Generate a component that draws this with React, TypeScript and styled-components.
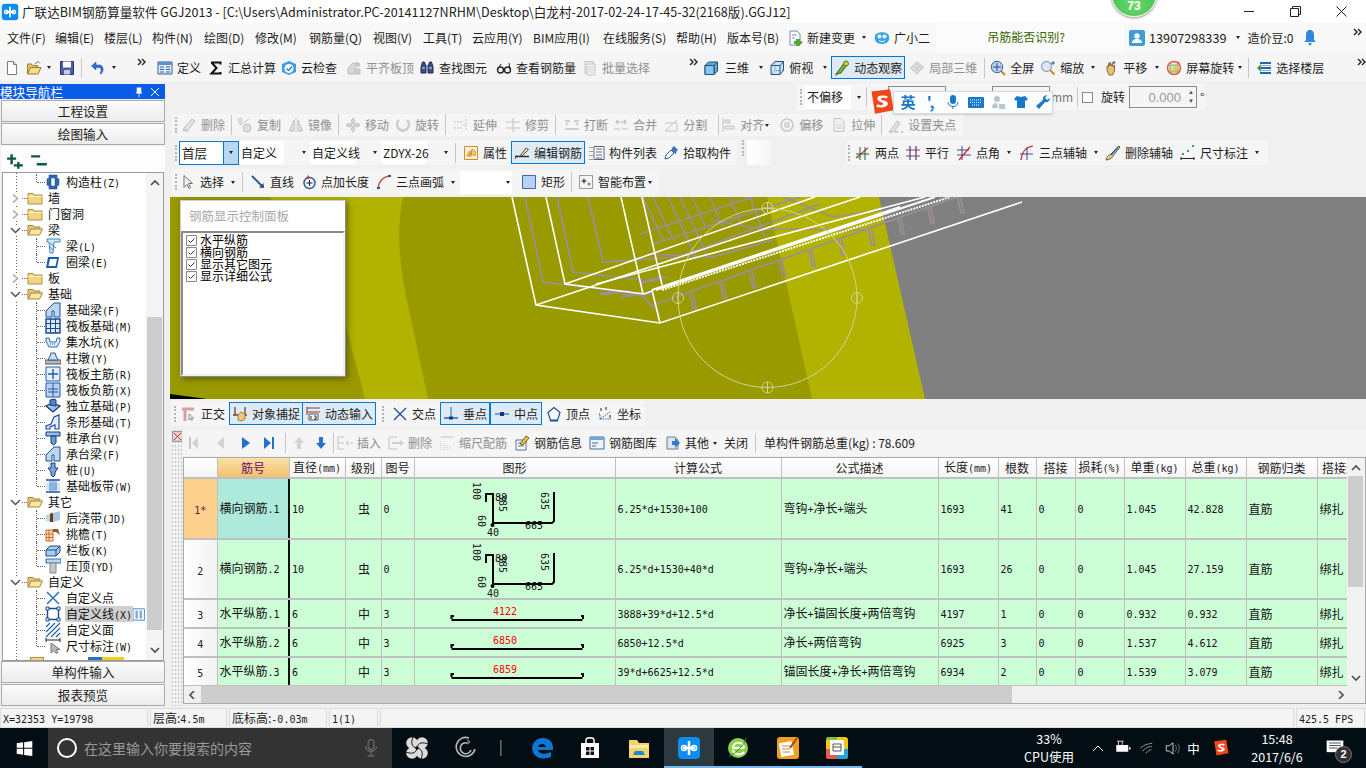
import React from "react";
import styled, { createGlobalStyle } from "styled-components";

const UI = `"Noto Sans CJK SC", "Liberation Sans", sans-serif`;
const MONO = `"DejaVu Sans Mono", "Noto Sans CJK SC", monospace`;

const Global = createGlobalStyle`
  * { box-sizing: border-box; }
  html, body { margin: 0; padding: 0; overflow: hidden; background: #f0f0f0; }
  body { font-family: ${UI}; font-size: 12px; color: #1c1c1c; }
`;

/* ---------- icon drawings ---------- */
const ic: Record<string, React.ReactNode> = {
  doc: <><path d="M3.5 1.5h6l3 3v10h-9z" fill="#fff" stroke="#7a7a7a" /><path d="M9.5 1.5v3h3" fill="#e4e4e4" stroke="#7a7a7a" /></>,
  open: <><path d="M1.5 14V4h4l1 1.5h5V8" fill="#e8c56a" stroke="#9a7a2c" /><path d="M1.5 14l3-6.5h10.5l-3 6.5z" fill="#f6dd8c" stroke="#9a7a2c" /><path d="M9 4l3-2.5 2 2" fill="none" stroke="#3c78d0" /></>,
  save: <><path d="M1.5 1.5h13v13h-13z" fill="#4a5fa8" stroke="#2a3570" /><path d="M4 1.5h8v6H4z" fill="#fff" /><path d="M5 10h6v4.5H5z" fill="#c7ccdc" /></>,
  undo: <path d="M11 14c3-3 3-8-1-9H6V2L1.5 6 6 10V7.5h3c2 0 3 3 1 6.5z" fill="#2c6fd0" stroke="#1b4b94" strokeWidth=".5" />,
  define: <><path d="M1 2h14v12H1z" fill="#e3edf8" stroke="#2e5f9e" /><path d="M1 2h14v3H1z" fill="#5e8fc8" /><path d="M3 7h4M3 9.5h4M3 12h4M9 7h4M9 9.5h4M9 12h4" stroke="#2e5f9e" /></>,
  sigma: <path d="M3 2.5h9.5v2M12.5 12v1.5H3.5L8.5 8 3.5 2.5" fill="none" stroke="#111" strokeWidth="2" />,
  check: <><path d="M1 4l7-3 7 3v8l-7 3-7-3z" fill="#3f9de8" /><circle cx="8" cy="8.5" r="4.5" fill="#fff" /><path d="M5.5 8.5l2 2 3.5-4" fill="none" stroke="#2f7fd0" strokeWidth="1.5" /></>,
  flush: <><path d="M2 14V8l5-5 4 1-2 4v6z" fill="#d8d8d8" stroke="#bdbdbd" /><path d="M9 14V9h5v5zM10 2l4 2-2 3z" fill="#cfcfcf" stroke="#c0c0c0" /></>,
  find: <><path d="M2 13V7l1.5-5h2L7 7v6zM9 13V7l1.5-5h2L14 7v6z" fill="#3a4f86" stroke="#1f2c52" /><path d="M7 5h2v4H7z" fill="#7f8fb8" /><path d="M3 8h3M10 8h3" stroke="#dfe6f5" /></>,
  look: <><circle cx="4.5" cy="10" r="3" fill="none" stroke="#222" strokeWidth="1.4" /><circle cx="11.5" cy="10" r="3" fill="none" stroke="#222" strokeWidth="1.4" /><path d="M2 9l3-5M14 9l-1-6M7.5 9.5h1" stroke="#222" /></>,
  batch: <><path d="M3 1.5h8v12H3z" fill="#eee" stroke="#c4c4c4" /><path d="M5 4h8v11H5z" fill="#f3f3f3" stroke="#c4c4c4" /><path d="M6.5 7h5M6.5 9.5h5M6.5 12h5" stroke="#cfcfcf" /></>,
  cube: <><path d="M2 5.5L5.5 2h9v9L11 14.5H2z" fill="#5da9d8" stroke="#20507c" /><path d="M2 5.5h9v9M11 5.5L14.5 2" fill="none" stroke="#20507c" /><path d="M2 5.5h9v9H2z" fill="#8cc6ea" stroke="#20507c" /></>,
  cubeT: <><path d="M2 5.5L6 1.5h8.5v9L11 14.5H2z" fill="#cfe4f4" stroke="#25527e" /><path d="M2 5.5h9v9M11 5.5l3.5-4" fill="none" stroke="#25527e" /><path d="M6 1.5v9h8.5M6 10.5L2 14.5" fill="none" stroke="#5d86ad" strokeDasharray="1 1" /></>,
  orbit: <><path d="M2 14l3-4 5-7 3 2-6 8z" fill="#73b53a" stroke="#3d6d17" /><circle cx="12" cy="3.5" r="2.5" fill="#d0d030" stroke="#4d7d17" /><path d="M1 15c2 0 3-.5 4-2" fill="none" stroke="#2d6fb0" /></>,
  cubeG: <><path d="M1.5 8L8 2l6.5 5L8 14z" fill="#e0e0e0" stroke="#c2c2c2" /><path d="M4 6l6.5 5M7 4l6 5M6 11l5-5" stroke="#c6c6c6" /></>,
  full: <><circle cx="7" cy="7" r="5.7" fill="#bcd2ee" stroke="#3861a0" /><path d="M7 3v8M3 7h8" stroke="#24488a" /><path d="M11 11l4 4" stroke="#b58a2a" strokeWidth="2" /></>,
  zoom: <><circle cx="6.5" cy="6.5" r="5" fill="#dce6f2" stroke="#7288a8" /><path d="M10 10l4.5 4.5" stroke="#c49a20" strokeWidth="2.2" /><path d="M13 1v4M11 3h4" stroke="#3060a0" /></>,
  pan: <><path d="M4 10V6l1.5 1V3l1.5 3V2l1.5 4 1-3 .5 4 1.5-2v6l-2 4H6z" fill="#e8c27a" stroke="#8a6a2a" /><path d="M11 1v3M9.5 2.5h3" stroke="#3060a0" /></>,
  spin: <><circle cx="8" cy="8" r="6.5" fill="none" stroke="#e05a40" strokeWidth="1.5" /><path d="M4 5h8v7H4z" fill="#cfe7a0" stroke="#80a060" /><path d="M9 6l3 5H6z" fill="#f0c040" /><path d="M12 1l2 3-3 .5z" fill="#e05a40" /></>,
  floors: <><path d="M4 3h11M4 8h11M4 13h11" stroke="#2268a8" strokeWidth="2" /><path d="M1 8l4-4v8z" fill="#3e9a3e" /><path d="M4 5.5h11M4 10.5h11" stroke="#8eb0cf" /></>,
  erase: <><path d="M2 13l2-3 7-8 3 2-7 9z" fill="#e4e4e4" stroke="#bbb" /><path d="M2 14h6" stroke="#c4c4c4" /></>,
  copy: <><circle cx="3" cy="3" r="1.8" fill="none" stroke="#c0c0c0" /><path d="M3 5v3l9-6" fill="none" stroke="#c4c4c4" /><circle cx="10" cy="11" r="4" fill="#dedede" stroke="#c0c0c0" /></>,
  mirror: <><path d="M1.5 14L6 3v11zM14.5 14L10 3v11z" fill="#e2e2e2" stroke="#bfbfbf" /><path d="M8 1v14" stroke="#c8c8c8" strokeDasharray="2 1" /></>,
  move: <path d="M8 1l2 3H9v3h3V6l3 2-3 2V9H9v3h1l-2 3-2-3h1V9H4v1L1 8l3-2v1h3V4H6z" fill="#dfdfdf" stroke="#bdbdbd" />,
  rotate: <path d="M4 3a6 6 0 1 0 8 0" fill="none" stroke="#cbcbcb" strokeWidth="2.4" />,
  extend: <path d="M1 5h8M1 11h8M13 2v12M10 8h3" stroke="#c2c2c2" strokeDasharray="2 1" />,
  trim: <path d="M8 1v14M1 5h14M1 11h14" stroke="#c2c2c2" />,
  brk: <path d="M1 4h5M10 4h5M1 12h14M2 8l2-2M12 6l2 2" stroke="#c2c2c2" strokeWidth="1.4" fill="none" />,
  merge: <path d="M1 12h6M9 12h6M3 5h10M5 3l-2 2 2 2M11 3l2 2-2 2" stroke="#c2c2c2" strokeWidth="1.2" fill="none" />,
  split: <><path d="M2 14L14 3" stroke="#c2c2c2" /><path d="M2 6h12M2 14h12v-8" stroke="#c6c6c6" fill="none" /></>,
  align: <><path d="M3 1v14" stroke="#bfbfbf" /><path d="M5 3h5v3H5zM5 9h9v3H5z" fill="#e6e6e6" stroke="#c6c6c6" /></>,
  offs: <><path d="M8 2a6 6 0 1 0 .1 0" fill="none" stroke="#cbcbcb" strokeWidth="1.6" /><path d="M6 6h4v4H6z" fill="#e2e2e2" stroke="#c2c2c2" /></>,
  stretch: <><path d="M3 1.5h7l3 3v10H3z" fill="#f0f0f0" stroke="#c4c4c4" /><path d="M5 8h6M5 11h6" stroke="#cfcfcf" /></>,
  grip: <><path d="M2 14l7-10 3 2-6 9z" fill="#e4e4e4" stroke="#c0c0c0" /><path d="M1 15h3M7 15h3M13 15h2" stroke="#bbb" strokeWidth="1.5" /></>,
  attr: <><path d="M1.5 1.5h13v13h-13z" fill="#fff2cf" stroke="#d08a30" /><path d="M3 11l4-6 3 3-2 4z" fill="#e8a040" /><path d="M9 4l4 3-1 4-4-2z" fill="#f6cb70" stroke="#8a6020" strokeWidth=".5" /></>,
  edit: <><path d="M1 11.5h14" stroke="#222" strokeWidth="1.4" /><path d="M1 14l2-4M6 11l6-8 2.5 1.5L8 11z" fill="#efe3b0" stroke="#52463a" /></>,
  list: <><path d="M5 1.5h10v13H5z" fill="#fff" stroke="#52647c" /><path d="M7 4h6M7 7h6M7 10h6M7 13h6" stroke="#52647c" /><path d="M1 2v1M1 6v1M1 10v1M1 14v1M3 2v1M3 6v1M3 10v1M3 14v1" stroke="#444" /></>,
  pick: <><path d="M2 14l1-4 5-5 3 3-5 5z" fill="#fff" stroke="#3060a8" /><path d="M9 3l2-2 4 4-2 2 .5 1-1 1-4-4z" fill="#3c73b8" /></>,
  two: <><path d="M1 13l12-10" stroke="#d03030" strokeWidth="1.1" /><path d="M1 9h13M5 2v13M10 2v13" stroke="#2e5c34" /><circle cx="3" cy="12" r="1" fill="#3e9a3e" /></>,
  para: <><path d="M1 5h14M1 11h14" stroke="#c03040" strokeWidth="1.2" /><path d="M5 1v14M11 1v14" stroke="#32468c" strokeWidth="1.2" /></>,
  ang: <><path d="M1 10h14M1 5h12M6 1v14" stroke="#3c4a92" /><path d="M3 15L14 2" stroke="#d02828" strokeWidth="1.2" /></>,
  arcA: <><path d="M2 15C3 6 7 2 14 1" fill="none" stroke="#d02828" strokeWidth="1.2" /><path d="M1 9h13M8 2v13" stroke="#3c4a92" /></>,
  brush: <><path d="M1 15c1-4 3-5 5-6l8-8 1 1-7 9c-1 2-4 4-7 4z" fill="#f0d070" stroke="#555" /><path d="M6 10l7-8" stroke="#3060b0" strokeWidth="1.5" /></>,
  dim: <><path d="M1 12v3M14 12v3M1 13.5h13" stroke="#222" /><path d="M2 8h2v2H2zM7 5h2v2H7zM12 0h2v2h-2z" fill="#39a53d" /></>,
  arrow: <path d="M4 1.5v12l3-3 2 4 1.5-1-2-4h4z" fill="#f6f6f6" stroke="#6a7080" />,
  line: <><path d="M2 2l11 11" stroke="#254f88" strokeWidth="1.8" /><path d="M9 13.5l5 .5-.5-5z" fill="#254f88" /></>,
  addL: <><circle cx="8.5" cy="9" r="5.5" fill="#eef3fa" stroke="#2d5590" strokeWidth="1.4" /><path d="M8.5 6v6M5.5 9h6" stroke="#222" /><path d="M8 1L5 3.5l3 2z" fill="#d04030" /></>,
  arc: <><path d="M2 14C3 7 7 3 13 2" fill="none" stroke="#c8563a" strokeWidth="1.5" /><path d="M1 13h3v2H1zM12 1h3v2h-3z" fill="#2a5a9c" /></>,
  rect: <path d="M1.5 1.5h13v13h-13z" fill="#b8d0f2" stroke="#3d6ab0" />,
  smart: <><path d="M1.5 1.5h13v13h-13z" fill="#f4f4f4" stroke="#444" strokeDasharray="1 1" /><path d="M6 4l1 2 2 1-2 1-1 2-1-2-2-1 2-1zM11 8l.7 1.5 1.3.5-1.3.5-.7 1.5-.7-1.500-1.300-.5 1.300-.5z" fill="#555" /></>,
  ortho: <><path d="M1 3h12" stroke="#d8a0a0" strokeWidth="3" /><path d="M4 3v12" stroke="#d8a0a0" strokeWidth="3" /><path d="M8 8v6l1.5-1.5 1 2 1-.5-1-2h2z" fill="#eee" stroke="#666" strokeWidth=".6" /></>,
  snap: <><path d="M3 1v8M13 1v8M1 9h14" stroke="#7a3a2a" strokeWidth="1.3" /><path d="M6 9l3-3 4 2v5l-3 2-4-1z" fill="#edc97c" stroke="#a08038" /></>,
  dyn: <><path d="M2 2h13M2 6h13" stroke="#8a3a3a" /><path d="M2 1v8" stroke="#8a3a3a" /><path d="M4 8h9v6H4z" fill="#fff" stroke="#555" /><path d="M6 10v3M9 10h2v3H9" stroke="#222" fill="none" /></>,
  inter: <path d="M2 2l12 12M14 2L2 14" stroke="#1c4f9a" strokeWidth="1.4" />,
  perp: <><path d="M1 12h14" stroke="#2a62b0" strokeWidth="1.5" /><path d="M8 1v11" stroke="#2a62b0" /><path d="M6 10.5h4v3H6z" fill="#123a78" /></>,
  mid: <><path d="M1 8h14" stroke="#5b8ac2" strokeWidth="1.6" /><path d="M6 6h4v4H6z" fill="#123a78" /></>,
  vert: <><path d="M8 1.5l6 5-2.5 8h-7L2 6.5z" fill="#fff" stroke="#1c4f9a" strokeWidth="1.2" /><path d="M4 13.5h8v2H4z" fill="#1c4f9a" /></>,
  coord: <><path d="M3 13h11M3 13V8M13 6L3 13" stroke="#2a62b0" strokeDasharray="1.5 1" fill="none" /><path d="M4 2v3M9 1v3M13 9v3M2 8h1" stroke="#222" /></>,
  first: <><path d="M3 2h2v12H3z" fill="#c6c6c6" /><path d="M12 2L6 8l6 6z" fill="#d2d2d2" /></>,
  prev: <path d="M12 2L5 8l7 6z" fill="#d2d2d2" />,
  next: <path d="M4 2l8 6-8 6z" fill="#2470d2" />,
  last: <><path d="M3 2l7 6-7 6z" fill="#2470d2" /><path d="M11 2h2v12h-2z" fill="#2470d2" /></>,
  up: <path d="M8 2l5 6h-3v6H6V8H3z" fill="#d2d2d2" />,
  down: <path d="M8 14l5-6h-3V2H6v6H3z" fill="#2b72cf" />,
  ins: <><path d="M1 2h6M1 2v12M1 14h6M1 8h6" stroke="#c2c2c2" /><path d="M9 6h3v4H9zM13 7h3v2h-3z" fill="#dadada" /></>,
  del: <><path d="M1 2h8M1 2v12M1 14h8" stroke="#c4c4c4" /><path d="M4 7h8v2H4z" fill="#cfcfcf" /><path d="M12 5l4 3-4 3z" fill="#cfcfcf" /></>,
  scale: <><path d="M2 15V5M5 15V7M8 15V9M11 15v-4" stroke="#c4c4c4" strokeDasharray="1 1" /><path d="M2 2h12" stroke="#c0c0c0" /></>,
  info: <><path d="M2 5h10v10H2z" fill="#fff" stroke="#4c6c9a" /><path d="M4 8h6M4 11h6" stroke="#4c6c9a" /><path d="M6 9l6-8 3 2-6 7z" fill="#f0c450" stroke="#7a5a1a" /></>,
  lib: <><path d="M1 2h14v12H1z" fill="#eef4fb" stroke="#3c6cab" /><path d="M1 2h14v3H1z" fill="#7aa4d6" /><path d="M3 8h6M3 11h4" stroke="#3c6cab" /></>,
  other: <><path d="M2 2h8l3 3v9H2z" fill="#dce6f2" stroke="#6c7e94" /><path d="M7 6h3V3l5 5-5 5v-3H7z" fill="#3a78c8" /></>,
  user: <><rect width="16" height="16" rx="2" fill="#3f9cd8" /><circle cx="8" cy="6" r="2.7" fill="#fff" /><path d="M3 13c0-3 2-4 5-4s5 1 5 4z" fill="#fff" /></>,
  bell: <><path d="M8 0c3 0 4 2.5 4 5v5l2 2H2l2-2V5c0-2.5 1-5 4-5z" fill="#2e86de" /><path d="M6 13h4l-2 3z" fill="#2e86de" /></>,
  change: <><path d="M3 1h7l3 3v11H3z" fill="#fff" stroke="#6c8eb8" /><path d="M5 5h5M5 8h3" stroke="#6c8eb8" /><path d="M9 9h4v2h2v3h-2v2H9v-2H7v-3h2z" fill="#54a83a" /></>,
  bot: <><path d="M1 6C2 1 14 1 15 6c1 4-1 8-7 8S0 10 1 6z" fill="#36a3ea" /><circle cx="5.5" cy="6.5" r="2" fill="#fff" /><circle cx="10.5" cy="6.5" r="2" fill="#fff" /><path d="M5 10.5c2 1.5 4 1.5 6 0" fill="none" stroke="#fff" /></>,
  folder: <><path d="M1 3.5h5l1 1.5h8v9H1z" fill="#f6d67c" stroke="#b28f46" /><path d="M1 6.5h14" stroke="#fff5cf" /></>,
  folderO: <><path d="M1 13V3.5h5l1 1.5h6v2" fill="#e6c878" stroke="#a6863e" /><path d="M1 13l3-6h11.500l-3 6z" fill="#fbe5a0" stroke="#a6863e" /></>,
  col: <path d="M4 1h8v3l2 1v6l-2 1v3H4v-3l-2-1V5l2-1zM6 4v8h4V4z" fill="#2f67b2" stroke="#1a3f7a" strokeWidth=".5" />,
  beam: <><path d="M2 1h13v3h-6l-1 11H5L4 4H2z" fill="#d6e8f6" stroke="#3a8ac0" /><path d="M5 5l6 5M4 8l4 4" stroke="#3a8ac0" /></>,
  ring: <path d="M3 3h11l-2 11H1zM5 5l-1.5 7h7L12 5z" fill="#1e5cb0" fillRule="evenodd" />,
  fbeam: <path d="M1 15V9l8-8h6v14H9V9H7v6z" fill="#bcd6ee" stroke="#1c4f9a" />,
  raft: <><path d="M1 1h14v14H1z" fill="#dbe8f6" stroke="#18498f" strokeWidth="1.4" /><path d="M1 5.5h14M1 10.5h14M5.500 1v14M10.500 1v14" stroke="#18498f" /></>,
  pit: <><path d="M1 4h3l1 4h6l1-4h3v3l-3 6H4L1 7z" fill="#dcebf8" stroke="#2a6cb0" /><path d="M5 10h6" stroke="#2a6cb0" strokeDasharray="1 1" /></>,
  pier: <><path d="M0 10h16v4H0z" fill="#b8b8b8" stroke="#555" /><path d="M6 3h4l1 3 2 4H3l2-4z" fill="#cfe0f0" stroke="#2a5a9c" /></>,
  rmain: <><path d="M1 1h14v14H1z" fill="#e6f0fa" stroke="#1f5bb0" /><path d="M8 3v10M3 8h10" stroke="#1f5bb0" strokeWidth="1.4" /></>,
  rneg: <><path d="M1 1h14v14H1z" fill="#bdd2ea" stroke="#1f5bb0" /><path d="M8 1v14M3 7h10M3 10h10" stroke="#1f5bb0" /></>,
  iso: <><path d="M1 8l6-3 8 3-7 6z" fill="#9ac0e6" stroke="#123b7c" strokeWidth="1.3" /><path d="M5 7V2l4-1 2 1v6z" fill="#4f83c4" stroke="#123b7c" /></>,
  strip: <path d="M1 15v-3l5-2 3-7 5-2v14h-4v-4l-5 2v2z" fill="#e2edf8" stroke="#1a4f9c" strokeWidth="1.2" />,
  cap: <><path d="M1 2h14v4H1z" fill="#9ac0e6" stroke="#123b7c" /><path d="M6 6h5v7l-2.500 2L6 13z" fill="#6e9cd2" stroke="#123b7c" /></>,
  pile: <path d="M6 1h4v5h3l-3 4v3l-2 2-2-2v-3L3 6h3z" fill="#7aa8da" stroke="#123b7c" />,
  band: <><path d="M1 5h14v7H1z" fill="#b9d2ee" opacity=".6" /><path d="M1 2h14M1 14h14" stroke="#1a4f9c" strokeWidth="1.5" /><path d="M5 2v12M11 2v12M7 2v12M9 2v12" stroke="#3c80c6" /></>,
  post: <><path d="M1 5l4-1v8l-4-1z" fill="#bcd6ee" /><path d="M5 4c3-2 2-2 3 0v8H5z" fill="#6e3d18" /><path d="M8 3l7-2v9l-7 2z" fill="#a9c6e6" /></>,
  eave: <><path d="M1 4h7v11H1z" fill="#f8dcc0" stroke="#c96a2a" /><path d="M1 8h7M1 11.500h7M4 4v11" stroke="#c96a2a" /><path d="M8 3h5l2 6-4-3H8z" fill="#8a5a32" /></>,
  rail: <><path d="M1 8l4-4h10v6l-4 4H1z" fill="#a9cbea" stroke="#1d4e8c" /><path d="M1 8h10v6M11 8l4-4" fill="none" stroke="#1d4e8c" /></>,
  ptop: <><path d="M1 1h15v4H1z" fill="#bcd8f2" stroke="#2a6cb0" /><path d="M5 5h6v10H5z" fill="#c8c8c8" stroke="#888" /></>,
  cpt: <path d="M2 2l12 12M14 2L2 14" stroke="#3a74bc" strokeWidth="1.6" />,
  cln: <><path d="M2.500 2.500h11v11h-11z" fill="none" stroke="#154a9a" strokeWidth="1.4" /><path d="M1 1h3v3H1zM12 1h3v3h-3zM1 12h3v3H1zM12 12h3v3h-3z" fill="#fff" stroke="#154a9a" /></>,
  cfc: <path d="M1 5l4-4M1 10l9-9M1 15L15 1M6 15l9-9M11 15l4-4" stroke="#1f5bb0" strokeWidth="1.1" />,
  dimt: <><path d="M1 2h14M1 0v4M15 0v4" stroke="#222" /><path d="M6 5v10l3-2.500 2 3 2-1-2-3h4z" fill="#bbb" stroke="#777" /></>,
  tbl: <><path d="M0 1h14v14H0z" fill="#fff" stroke="#2670c8" /><path d="M3 3h3v10H3zM8 3h3v10H8z" fill="#2670c8" opacity=".6" /></>,
  pin: <path d="M5 2h6v6l1.500 2h-9L5 8zM7.500 10h1v5h-1z" fill="#fff" />,
  plus: <path d="M5 1v9M1 5h8M11 8v6M7 11h8" stroke="#0b5c3a" strokeWidth="2.200" />,
  minus: <path d="M1 3h8M6 10h9" stroke="#0b5c3a" strokeWidth="2.200" />,
  closeRed: <><path d="M1 1h14v14H1z" fill="#f7d8d8" stroke="#555" /><path d="M3 3l10 10M13 3L3 13" stroke="#b02a2a" strokeWidth="1.400" /></>,
};

const tb: Record<string, React.ReactNode> = {
  win: <path d="M1 4.500l9-1.300V11H1zM11.500 3L23 1.300V11H11.500zM1 12.500h9v8.300L1 19.500zM11.500 12.500H23V22.700L11.500 21z" fill="#fff" />,
  mic: <><rect x="8.500" y="2" width="7" height="12" rx="3.500" fill="none" stroke="#8a8a8a" /><path d="M5.500 10c0 8 13 8 13 0M12 17v4M8 21.500h8" fill="none" stroke="#8a8a8a" /></>,
  fan: <><circle cx="7" cy="7" r="5.800" fill="#dcdcdc" /><circle cx="17" cy="7" r="5.800" fill="#dcdcdc" /><circle cx="7" cy="17" r="5.800" fill="#dcdcdc" /><circle cx="17" cy="17" r="5.800" fill="#dcdcdc" /><path d="M12 12C6 11 6 6 8 1M12 12C18 13 18 18 16 23M12 12c1-6 6-6 11-4M12 12c-1 6-6 6-11 4" fill="none" stroke="#111" /></>,
  swirl: <><path d="M21 13a9.500 9.500 0 1 1-6-11" fill="none" stroke="#b8b8b8" strokeWidth="1.600" /><path d="M17 14a5.500 5.500 0 1 1-3.500-7" fill="none" stroke="#b8b8b8" strokeWidth="1.600" /><path d="M13 4l3 2-3 2" fill="none" stroke="#b8b8b8" /></>,
  edge: <path d="M2 12C3 5 8 2 13 2c6 0 10 4 10 10v2H8c.5 4 7 5 13 2v5c-7 3-18 2-19-9zm6-1h8c0-4-7-4-8 0z" fill="#0a78d7" />,
  store: <><path d="M3 7h18v15H3z" fill="#fff" /><path d="M8 7V4c0-3 8-3 8 0v3" fill="none" stroke="#fff" strokeWidth="1.500" /><path d="M8 11h3.500v3.500H8zM12.500 11H16v3.500h-3.500zM8 15.500h3.500V19H8zM12.500 15.500H16V19h-3.500z" fill="#111" /></>,
  fold: <><path d="M2 4h8l2 3h10v15H2z" fill="#f4d36b" /><path d="M2 9h20v3H2z" fill="#fbe9a8" /><path d="M8 15h8l2 4H6z" fill="#1e88d8" /></>,
  app: <><rect x="1" y="1" width="22" height="22" rx="4" fill="#0e8cf0" /><path d="M12 5v14M6 12h12" stroke="#fff" strokeWidth="2.500" /><circle cx="7" cy="12" r="2.500" fill="none" stroke="#fff" strokeWidth="1.500" /><circle cx="17" cy="12" r="2.500" fill="none" stroke="#fff" strokeWidth="1.500" /></>,
  ie: <><circle cx="12" cy="12" r="10" fill="#8bd14a" /><path d="M6 12h12M7 12c0-7 10-7 11 0M7 14c1 5 8 6 11 2" fill="none" stroke="#fff" strokeWidth="2.200" /><path d="M3 20C6 21 20 8 20 2" fill="none" stroke="#3a8a2e" /></>,
  notes: <><rect x="1" y="1" width="22" height="22" rx="3" fill="#f0a020" /><path d="M4 6h13v14H4z" fill="#fff" transform="rotate(-10 10 13)" /><path d="M6 10h8M6 13h8M7 16h7" stroke="#c84" /><path d="M14 12L21 2" stroke="#a5421a" strokeWidth="2" /></>,
  board: <><rect x="1" y="1" width="22" height="22" rx="3" fill="#f5c518" /><path d="M1 13h11v10H4a3 3 0 0 1-3-3z" fill="#e85a4f" /><path d="M12 13h11v7a3 3 0 0 1-3 3h-8z" fill="#1fa5d8" /><path d="M1 4a3 3 0 0 1 3-3h8v3H1z" fill="#7bc043" /><path d="M5 4h14v15H5z" fill="#fff" /><path d="M8 8h8M8 8v7h8V8M8 11h8" fill="none" stroke="#555" /></>,
  batt: <><path d="M3 8h16v9H3z" fill="#fff" /><path d="M20 11h2v3h-2z" fill="#fff" /><path d="M6 3v5M11 3v5M4 3h9" stroke="#fff" /></>,
  wifi: <path d="M2 12c5-5 12-6 16-6M5 16c3-4 8-6 12-6M9 19c2-2 5-4 8-5" fill="none" stroke="#fff" strokeDasharray="2 1" />,
  spk: <><path d="M3 9h4l5-4v15l-5-4H3z" fill="none" stroke="#fff" /><path d="M15 8c2 3 2 6 0 9M18 6c3 4 3 9 0 13" fill="none" stroke="#888" /></>,
  sg: <><path d="M3 3l16-2 3 18-16 3z" fill="#f0471a" /><path d="M8 9c0-3 6-3 9-2l-1 2c-2-1-5-1-5 .5s6 1 6 4-6 4-10 2.500l1-2c2 1 5 1 5-.5S8 12 8 9z" fill="#fff" /></>,
  note: <><path d="M2 3h20v14H2z" fill="#fff" /><path d="M5 6h14M5 9h14M5 12h10" stroke="#333" /></>,
};

const Svg = styled.svg<{ $s: number }>`
  width: ${(p) => p.$s}px;
  height: ${(p) => p.$s}px;
  flex: none;
  display: block;
`;
const Ico = ({ k, s = 16 }: { k: string; s?: number }) => (
  <Svg $s={s} viewBox="0 0 16 16">{ic[k]}</Svg>
);
const TIco = ({ k, s = 24 }: { k: string; s?: number }) => (
  <Svg $s={s} viewBox="0 0 24 24">{tb[k]}</Svg>
);

/* ---------- mixed bitmap-like text ---------- */
const Lat = styled.span`
  font-family: ${MONO};
  font-size: 10px;
`;
const Mix = ({ t }: { t: string }) => (
  <>
    {t.split(/([\x20-\x7e]+)/).map((s, i) => (i % 2 ? <Lat key={i}>{s}</Lat> : s))}
  </>
);

/* ---------- chrome ---------- */
const Page = styled.div`
  position: relative;
  width: 1366px;
  height: 768px;
  overflow: hidden;
  display: flex;
  flex-direction: column;
  background: #f0f0f0;
`;
const TitleBar = styled.div`
  height: 23px;
  background: #fff;
  display: flex;
  align-items: center;
  padding-left: 1px;
`;
const TitleText = styled.div`
  margin-left: 3px;
  font-size: 12.6px;
  line-height: 23px;
  white-space: nowrap;
  width: 1204px;
  color: #222;
`;
const WinBtn = styled.div<{ $w: number }>`
  width: ${(p) => p.$w}px;
  display: flex;
  justify-content: center;
`;
const Badge = styled.div`
  position: absolute;
  left: 1111px;
  top: -29px;
  width: 46px;
  height: 46px;
  border-radius: 50%;
  background: radial-gradient(circle at 50% 70%, #68d86a, #37b84a);
  box-shadow: 0 1px 3px rgba(0, 0, 0, 0.45);
  border: 1px solid #e5f5e5;
  color: #fff;
  font: bold 12px/12px "Liberation Sans", sans-serif;
  display: flex;
  align-items: flex-end;
  justify-content: center;
  padding-bottom: 4px;
`;
const MenuBar = styled.div`
  height: 31px;
  background: #f8f8f8;
  display: flex;
  align-items: center;
  padding-left: 7px;
  padding-bottom: 2px;
  white-space: nowrap;
`;
const MenuItem = styled.div<{ $w?: number; $ml?: number; $dim?: boolean; $fs?: number }>`
  ${(p) => (p.$w ? `width: ${p.$w}px;` : "")}
  margin-left: ${(p) => p.$ml ?? 0}px;
  ${(p) => (p.$dim ? "color:#777;" : "")}
  ${(p) => (p.$fs ? `font-size:${p.$fs}px;` : "")}
  line-height: 20px;
  flex: none;
`;
const Hint = styled.div`
  width: 188px;
  height: 31px;
  margin: 0 5px 0 6px;
  padding-right: 8px;
  background: #fbfbfb;
  color: #336600;
  text-align: center;
  line-height: 30px;
  flex: none;
`;
const Inline = styled.div<{ $gap?: number; $ml?: number }>`
  display: flex;
  align-items: center;
  gap: ${(p) => p.$gap ?? 4}px;
  margin-left: ${(p) => p.$ml ?? 0}px;
  flex: none;
`;
const Caret = styled.i<{ $ml?: number; $mr?: number }>`
  display: block;
  flex: none;
  width: 0;
  height: 0;
  margin-left: ${(p) => p.$ml ?? 6}px;
  margin-right: ${(p) => p.$mr ?? 0}px;
  border-left: 2.5px solid transparent;
  border-right: 2.5px solid transparent;
  border-top: 3px solid #222;
`;
const MoreSvg = styled.svg<{ $ml: number }>`
  width: 9px;
  height: 8px;
  margin-left: ${(p) => p.$ml}px;
  margin-bottom: 11px;
  flex: none;
`;
const More = ({ ml = 0 }: { ml?: number }) => (
  <MoreSvg $ml={ml} viewBox="0 0 9 8">
    <path d="M1 1l3 3-3 3M5 1l3 3-3 3" fill="none" stroke="#222" strokeWidth="1.400" />
  </MoreSvg>
);
const MainBar = styled.div`
  height: 27px;
  display: flex;
  align-items: center;
  white-space: nowrap;
  background: #f5f5f5;
`;
const Sep = styled.div<{ $ml?: number; $mr?: number }>`
  width: 1px;
  height: 20px;
  background: #c6c6c6;
  margin-left: ${(p) => p.$ml ?? 6}px;
  margin-right: ${(p) => p.$mr ?? 6}px;
  flex: none;
`;
const ToolWrap = styled.div<{ $m: number; $dim?: boolean; $on?: boolean; $pad?: number; $gap?: number }>`
  display: flex;
  align-items: center;
  flex: none;
  gap: ${(p) => p.$gap ?? 4}px;
  height: ${(p) => (p.$on ? "23px" : "auto")};
  margin-left: ${(p) => p.$m}px;
  padding: 0 ${(p) => p.$pad ?? 0}px;
  color: ${(p) => (p.$dim ? "#8f8f8f" : "#1c1c1c")};
  line-height: 18px;
  ${(p) => (p.$on ? "background:#deebf6;border:1px solid #0078d7;" : "")}
`;
const Tool = ({ icon, m = 7, dim, on, pad, gap, children }: { icon?: string; m?: number; dim?: boolean; on?: boolean; pad?: number; gap?: number; children?: React.ReactNode }) => (
  <ToolWrap $m={m} $dim={dim} $on={on} $pad={pad} $gap={gap}>
    {icon && <Ico k={icon} />}
    {children}
  </ToolWrap>
);
const White = styled.div<{ $w: number; $ml?: number; $h?: number }>`
  width: ${(p) => p.$w}px;
  height: ${(p) => p.$h ?? 23}px;
  margin-left: ${(p) => p.$ml ?? 0}px;
  background: #fff;
  display: flex;
  align-items: center;
  padding-left: 2px;
  flex: none;
  line-height: 18px;
`;
const Grip = styled.div<{ $ml?: number }>`
  width: 2px;
  height: 16px;
  margin-left: ${(p) => p.$ml ?? 0}px;
  border-left: 2px dotted #b4b4b4;
  flex: none;
`;

/* ---------- workspace ---------- */
const Work = styled.div`
  display: flex;
  margin-top: 3px;
  height: 622px;
`;
const Nav = styled.div`
  width: 165px;
  display: flex;
  flex-direction: column;
  flex: none;
`;
const NavHead = styled.div`
  height: 15px;
  background: #0a5ce6;
  color: #fff;
  line-height: 15px;
  font-size: 12.6px;
  display: flex;
  align-items: center;
  flex: none;
`;
const NavTitle = styled.div`
  width: 134px;
`;
const NavBtn = styled.div<{ $mt?: number }>`
  height: 22px;
  margin: ${(p) => p.$mt ?? 0}px 0 0 1px;
  width: 164px;
  border: 1px solid #aaa;
  background: linear-gradient(#fbfbfb, #ececec);
  text-align: center;
  line-height: 20px;
  font-size: 12.6px;
  flex: none;
`;
const PlusRow = styled.div`
  height: 26px;
  width: 164px;
  margin: 1px 0 0 1px;
  background: #fdfdfd;
  display: flex;
  align-items: center;
  padding: 5px 0 0 5px;
  gap: 6px;
  flex: none;
`;
const TreeBox = styled.div`
  flex: none;
  width: 162px;
  height: 489px;
  margin: 0 0 0 2px;
  border: 1px solid #9a9a9a;
  background: #fff;
  display: flex;
  overflow: hidden;
`;
const TreeList = styled.div`
  width: 143px;
  height: 487px;
  padding-top: 1px;
  overflow: hidden;
  flex: none;
  background: repeating-linear-gradient(#666 0 1px, transparent 1px 3px) 13px 0 / 1px 100% no-repeat, #fff;
`;
const TRow = styled.div`
  position: relative;
  height: 16px;
  display: flex;
  align-items: center;
  white-space: nowrap;
  line-height: 16px;
  font-size: 12px;
  color: #111;
`;
const ParentRow = styled(TRow)`
  padding-left: 7px;
`;
const Chev = styled.svg`
  width: 11px;
  height: 11px;
  flex: none;
  background: #fff;
`;
const Dots = styled.i`
  width: 5px;
  border-top: 1px dotted #666;
  margin: 0 0 0 1px;
  flex: none;
`;
const ChildRow = styled(TRow)<{ $last?: boolean }>`
  padding-left: 42px;
  &::before {
    content: "";
    position: absolute;
    left: 33px;
    top: 0;
    height: ${(p) => (p.$last ? "8px" : "16px")};
    border-left: 1px dotted #666;
  }
  &::after {
    content: "";
    position: absolute;
    left: 34px;
    top: 8px;
    width: 8px;
    border-top: 1px dotted #666;
  }
`;
const RowLabel = styled.span<{ $sel?: boolean }>`
  margin-left: 4px;
  padding: 0 1px;
  height: 16px;
  ${(p) => (p.$sel ? "background:#cfcfcf;" : "")}
`;
const ClippedRow = styled.div`
  height: 6px;
  overflow: hidden;
  display: flex;
  align-items: flex-start;
  padding: 3px 0 0 27px;
  gap: 44px;
`;
const ClippedFold = styled.i`
  width: 14px;
  height: 3px;
  background: #f6d67c;
  border: 1px solid #b28f46;
  border-bottom: 0;
`;
const ClippedTag = styled.i`
  width: 36px;
  height: 3px;
  background: linear-gradient(90deg, #2670c8 0 40%, #f2cf1a 40%);
`;
const TreeBar = styled.div`
  flex: 1;
  background: #f4f4f4;
  display: flex;
  flex-direction: column;
  align-items: center;
`;
const ArrowBox = styled.div<{ $mt?: number }>`
  height: 16px;
  width: 16px;
  margin-top: ${(p) => p.$mt ?? 0}px;
  display: flex;
  align-items: center;
  justify-content: center;
  flex: none;
`;
const dirs: Record<string, string> = { up: "M1 6l4-4 4 4", down: "M1 2l4 4 4-4", left: "M6 0L2 4l4 4", right: "M2 0l4 4-4 4" };
const Arrow = ({ d, mt }: { d: string; mt?: number }) => (
  <ArrowBox $mt={mt}>
    <svg width="10" height="8" viewBox="0 0 10 8">
      <path d={dirs[d]} fill="none" stroke="#505050" strokeWidth="1.700" />
    </svg>
  </ArrowBox>
);
const Thumb = styled.div<{ $mt: number; $h: number; $w?: number }>`
  width: ${(p) => p.$w ?? 15}px;
  height: ${(p) => p.$h}px;
  margin-top: ${(p) => p.$mt}px;
  background: #cdcdcd;
  flex: none;
`;
const Grow = styled.div`
  flex: 1;
`;

/* ---------- content ---------- */
const Content = styled.div`
  margin-left: 5px;
  width: 1196px;
  display: flex;
  flex-direction: column;
`;
const Bar = styled.div<{ $h: number; $mt?: number; $ml?: number; $w?: number }>`
  height: ${(p) => p.$h}px;
  margin-top: ${(p) => p.$mt ?? 0}px;
  margin-left: ${(p) => p.$ml ?? 0}px;
  ${(p) => (p.$w ? `width:${p.$w}px;` : "")}
  background: #f5f5f5;
  display: flex;
  align-items: center;
  white-space: nowrap;
  flex: none;
`;
const RowGroup = styled.div<{ $h: number; $mt: number }>`
  height: ${(p) => p.$h}px;
  margin-top: ${(p) => p.$mt}px;
  display: flex;
  flex: none;
`;
const Spin = styled.div<{ $w: number; $ml: number }>`
  width: ${(p) => p.$w}px;
  height: 22px;
  margin-left: ${(p) => p.$ml}px;
  border: 1px solid #8a8a8a;
  background: #f5f5f5;
  display: flex;
  align-items: center;
  justify-content: flex-end;
  color: #9a9a9a;
  padding-right: 2px;
  gap: 7px;
  font: 13px "Liberation Sans", sans-serif;
  flex: none;
`;
const SpinArrows = styled.div`
  font-size: 6px;
  line-height: 9px;
  color: #555;
  text-align: center;
`;
const Check = styled.div<{ $ml: number }>`
  width: 11px;
  height: 11px;
  margin-left: ${(p) => p.$ml}px;
  border: 1px solid #888;
  background: #fff;
  flex: none;
`;
const Combo = styled.div`
  width: 60px;
  height: 24px;
  margin-left: 2px;
  background: #fff;
  border: 1px solid #0078d7;
  display: flex;
  align-items: center;
  padding-left: 2px;
  font-size: 12.6px;
  flex: none;
`;
const ComboBtn = styled.div`
  width: 15px;
  height: 22px;
  margin-left: auto;
  background: #b8d8f2;
  border-left: 1px solid #0078d7;
  display: flex;
  align-items: center;
  justify-content: center;
  flex: none;
`;
const Faded = styled.div`
  width: 24px;
  height: 25px;
  margin-left: 3px;
  background: linear-gradient(90deg, #fff, #f5f5f5);
`;
const Canvas = styled.div`
  position: relative;
  height: 202px;
  margin-top: 2px;
  flex: none;
  overflow: hidden;
`;
const CanvasSvg = styled.svg`
  display: block;
  width: 1196px;
  height: 202px;
`;
const Panel = styled.div`
  position: absolute;
  left: 10px;
  top: 3px;
  width: 166px;
  height: 177px;
  background: #fff;
  border: 1px solid #8a8a8a;
  border-top-color: #cfcfcf;
  border-left-color: #cfcfcf;
  box-shadow: 2px 2px 6px rgba(40, 40, 0, 0.5);
  display: flex;
  flex-direction: column;
`;
const PanelHead = styled.div`
  height: 30px;
  flex: none;
  padding-left: 8px;
  line-height: 30px;
  color: #a8a8a8;
  font-size: 12.5px;
`;
const PanelBody = styled.div`
  flex: 1;
  border: 2px solid;
  border-color: #8a8a8a #f0f0f0 #f0f0f0 #8a8a8a;
  padding: 1px 0 0 3px;
`;
const CheckRow = styled.div`
  height: 12px;
  display: flex;
  align-items: center;
  gap: 3px;
  line-height: 12px;
  font-size: 12px;
  color: #000;
  white-space: nowrap;
`;
const CheckBox = styled.svg`
  width: 11px;
  height: 11px;
  flex: none;
`;
const Lower = styled.div`
  margin-top: 4px;
  height: 276px;
  display: flex;
  flex: none;
`;
const Strip = styled.div`
  width: 13px;
  flex: none;
  padding: 1px 0 0 2px;
  background-image: radial-gradient(#c4c4c4 0.8px, transparent 1px);
  background-size: 3px 4px;
  background-position: 1px 14px;
`;
const StripIcon = styled.div`
  width: 10px;
  overflow: hidden;
  background: #f0f0f0;
`;
const Main = styled.div`
  width: 1183px;
  display: flex;
  flex-direction: column;
  flex: none;
`;
const GridFrame = styled.div`
  flex: none;
  height: 247px;
  margin-top: 1px;
  border: 1px solid #aaa;
  background: #f0f0f0;
  display: flex;
  flex-direction: column;
`;
const GridRow = styled.div`
  display: flex;
  height: 228px;
  flex: none;
`;
const TableClip = styled.div`
  width: 1163px;
  overflow: hidden;
  flex: none;
  background: #fff;
`;
const Table = styled.table`
  table-layout: fixed;
  border-collapse: collapse;
  width: 1191px;
  font-size: 12px;
  color: #111;
`;
const Th = styled.th<{ $sel?: boolean }>`
  padding: 0;
  font-weight: normal;
  line-height: 14px;
  border: 1px solid #c0c0c0;
  border-width: 0 1px 2px 0;
  background: ${(p) => (p.$sel ? "linear-gradient(#fbe0a8,#f3c06c)" : "linear-gradient(#ffffff,#f4f4f4)")};
  color: ${(p) => (p.$sel ? "#6a0a60" : "#222")};
  white-space: nowrap;
  overflow: hidden;
`;
const Td = styled.td<{ $hl?: boolean; $bar?: boolean; $c?: boolean }>`
  padding: 0 0 0 2px;
  border: 1px solid #c0c0c0;
  border-width: 0 1px 2px 0;
  ${(p) => (p.$bar ? "border-right:2px solid #111;" : "")}
  background: ${(p) => (p.$hl ? "#aeeadb" : "#ccffd6")};
  text-align: ${(p) => (p.$c ? "center" : "left")};
  white-space: nowrap;
  overflow: hidden;
  line-height: 14px;
`;
const RowTh = styled.td<{ $on?: boolean }>`
  padding: 0;
  text-align: center;
  border: 1px solid #c0c0c0;
  border-width: 0 1px 2px 0;
  background: ${(p) => (p.$on ? "#fdd18c" : "linear-gradient(90deg,#fff,#f2f2f2)")};
  color: ${(p) => (p.$on ? "#7a0a50" : "#222")};
`;
const Tr = styled.tr<{ $h: number }>`
  height: ${(p) => p.$h}px;
`;
const ShapeCell = styled.td`
  padding: 0;
  vertical-align: top;
  border: 1px solid #c0c0c0;
  border-width: 0 1px 2px 0;
  background: #ccffd6;
  overflow: hidden;
`;
const ShapeSvg = styled.svg<{ $h: number }>`
  display: block;
  width: 200px;
  height: ${(p) => p.$h}px;
`;
const VBar = styled.div`
  width: 17px;
  flex: none;
  display: flex;
  flex-direction: column;
  align-items: center;
  background: #f2f2f2;
`;
const HBar = styled.div`
  height: 17px;
  flex: none;
  display: flex;
  align-items: center;
  background: #f0f0f0;
  padding-left: 1px;
`;
const HEnd = styled.div`
  width: 15px;
  flex: none;
`;
const Status = styled.div`
  margin-top: 2px;
  height: 20px;
  flex: none;
  display: flex;
  font: 12px/18px ${UI};
`;
const Cell = styled.div<{ $w: number; $ml?: number }>`
  width: ${(p) => p.$w}px;
  margin-left: ${(p) => p.$ml ?? 2}px;
  border: 1px solid #dcdcdc;
  padding-left: 2px;
  white-space: nowrap;
  flex: none;
  background: #f4f4f4;
`;
const Taskbar = styled.div`
  height: 40px;
  flex: none;
  background: #020e14;
  display: flex;
  align-items: center;
`;
const Start = styled.div`
  width: 48px;
  display: flex;
  justify-content: center;
  flex: none;
`;
const Search = styled.div`
  width: 344px;
  height: 40px;
  background: #333333;
  color: #9a9a9a;
  display: flex;
  align-items: center;
  flex: none;
  font-size: 14px;
  padding-left: 9px;
`;
const SearchMic = styled.div`
  margin-left: 109px;
`;
const Ring = styled.div`
  width: 20px;
  height: 20px;
  border: 2px solid #fff;
  border-radius: 50%;
  flex: none;
  margin-right: 7px;
`;
const TaskApp = styled.div<{ $w?: number; $on?: boolean; $open?: boolean; $pl?: number }>`
  width: ${(p) => p.$w ?? 49.5}px;
  height: 40px;
  display: flex;
  align-items: center;
  justify-content: center;
  flex: none;
  padding-left: ${(p) => p.$pl ?? 0}px;
  ${(p) => (p.$on ? "background:#2c3a40;" : "")}
  ${(p) => (p.$open ? "border-bottom:2px solid #76b9ed;padding-top:2px;" : "")}
`;
const TraySep = styled.div`
  width: 2px;
  height: 16px;
  margin: 0 10px 0 9px;
  border-left: 1px solid #666;
  border-right: 1px solid #444;
  flex: none;
`;
const Tray = styled.div`
  display: flex;
  align-items: center;
  color: #fff;
  flex: none;
  font-size: 12.5px;
  margin-left: 152px;
`;
const Cpu = styled.div`
  width: 70px;
  margin-right: 2px;
  text-align: center;
  line-height: 18px;
  flex: none;
`;
const TrayIcon = styled.div<{ $w: number }>`
  width: ${(p) => p.$w}px;
  display: flex;
  justify-content: center;
  flex: none;
`;
const Clock = styled.div`
  width: 66px;
  margin-left: 4px;
  text-align: center;
  line-height: 18px;
  flex: none;
`;
const Notif = styled.div`
  position: relative;
  width: 44px;
  margin-left: 3px;
  display: flex;
  justify-content: center;
  flex: none;
`;
const NotifCount = styled.div`
  position: absolute;
  right: 5px;
  top: 8px;
  width: 17px;
  height: 17px;
  border-radius: 50%;
  background: #333;
  border: 1px solid #777;
  color: #fff;
  font: bold 11px/15px "Liberation Sans", sans-serif;
  text-align: center;
`;
/* IME overlay */
const Ime = styled.div`
  position: absolute;
  left: 868px;
  top: 90px;
  height: 24px;
  display: flex;
  align-items: center;
`;
const ImeBar = styled.div`
  width: 160px;
  height: 23px;
  margin-left: -3px;
  background: #fbfdff;
  border: 1px solid #cfdce6;
  box-shadow: 0 1px 2px rgba(0, 0, 0, 0.15);
  display: flex;
  align-items: center;
  padding-left: 6px;
  gap: 6.5px;
  color: #1a78c8;
  font-weight: bold;
  font-size: 15px;
`;
const ImeT = styled.span`
  width: 16px;
  flex: none;
  line-height: 18px;
  text-align: center;
`;
const ImeI = styled.svg`
  width: 16px;
  height: 16px;
  flex: none;
`;

/* ---------- data ---------- */
const menus: [string, number][] = [
  ["文件(F)", 48], ["编辑(E)", 49], ["楼层(L)", 48], ["构件(N)", 52], ["绘图(D)", 51], ["修改(M)", 54], ["钢筋量(Q)", 64],
  ["视图(V)", 50], ["工具(T)", 49], ["云应用(Y)", 61], ["BIM应用(I)", 70], ["在线服务(S)", 73], ["帮助(H)", 51], ["版本号(B)", 60],
];

type Tree = { t: string; i?: string; p?: "o" | "c"; last?: boolean; sel?: boolean };
const tree: Tree[] = [
  { t: "构造柱(Z)", i: "col", last: true },
  { t: "墙", p: "c" }, { t: "门窗洞", p: "c" }, { t: "梁", p: "o" },
  { t: "梁(L)", i: "beam" }, { t: "圈梁(E)", i: "ring", last: true },
  { t: "板", p: "c" }, { t: "基础", p: "o" },
  { t: "基础梁(F)", i: "fbeam" }, { t: "筏板基础(M)", i: "raft" }, { t: "集水坑(K)", i: "pit" }, { t: "柱墩(Y)", i: "pier" },
  { t: "筏板主筋(R)", i: "rmain" }, { t: "筏板负筋(X)", i: "rneg" }, { t: "独立基础(P)", i: "iso" }, { t: "条形基础(T)", i: "strip" },
  { t: "桩承台(V)", i: "cap" }, { t: "承台梁(F)", i: "fbeam" }, { t: "桩(U)", i: "pile" }, { t: "基础板带(W)", i: "band", last: true },
  { t: "其它", p: "o" },
  { t: "后浇带(JD)", i: "post" }, { t: "挑檐(T)", i: "eave" }, { t: "栏板(K)", i: "rail" }, { t: "压顶(YD)", i: "ptop", last: true },
  { t: "自定义", p: "o" },
  { t: "自定义点", i: "cpt" }, { t: "自定义线(X)", i: "cln", sel: true }, { t: "自定义面", i: "cfc" }, { t: "尺寸标注(W)", i: "dimt", last: true },
];

const cols = [33, 72, 56, 36, 33, 201, 166, 157, 60, 38, 39, 49, 61, 61, 71, 58];
const heads = ["", "筋号", "直径(mm)", "级别", "图号", "图形", "计算公式", "公式描述", "长度(mm)", "根数", "搭接", "损耗(%)", "单重(kg)", "总重(kg)", "钢筋归类", "搭接形式"];
type R = { n: string; name: string; d: string; g: string; no: string; f: string; desc: string; len: string; cnt: string; w: string; tw: string; h: number; shape?: string };
const rows: R[] = [
  { n: "1*", name: "横向钢筋.1", d: "10", g: "虫", no: "0", f: "6.25*d+1530+100", desc: "弯钩+净长+端头", len: "1693", cnt: "41", w: "1.045", tw: "42.828", h: 61 },
  { n: "2", name: "横向钢筋.2", d: "10", g: "虫", no: "0", f: "6.25*d+1530+40*d", desc: "弯钩+净长+端头", len: "1693", cnt: "26", w: "1.045", tw: "27.159", h: 60 },
  { n: "3", name: "水平纵筋.1", d: "6", g: "中", no: "3", f: "3888+39*d+12.5*d", desc: "净长+锚固长度+两倍弯钩", len: "4197", cnt: "1", w: "0.932", tw: "0.932", h: 29, shape: "4122" },
  { n: "4", name: "水平纵筋.2", d: "6", g: "中", no: "3", f: "6850+12.5*d", desc: "净长+两倍弯钩", len: "6925", cnt: "3", w: "1.537", tw: "4.612", h: 29, shape: "6850" },
  { n: "5", name: "水平纵筋.3", d: "6", g: "中", no: "3", f: "39*d+6625+12.5*d", desc: "锚固长度+净长+两倍弯钩", len: "6934", cnt: "2", w: "1.539", tw: "3.079", h: 29, shape: "6859" },
];

const SvgT = styled.text<{ $red?: boolean }>`
  font-family: ${MONO};
  font-size: 10px;
  fill: ${(p) => (p.$red ? "#f00" : "#111")};
`;
const BentShape = () => (
  <ShapeSvg $h={58} viewBox="0 0 200 58">
    <path d="M71 23v-8h7v29h59l2-2V13" fill="none" stroke="#000" strokeWidth="2" />
    <circle cx="77.500" cy="46" r="2" fill="#000" />
    <SvgT transform="translate(58 3) rotate(90)">100</SvgT>
    <SvgT transform="translate(63 36) rotate(90)">60</SvgT>
    <SvgT x="72" y="57">40</SvgT>
    <SvgT transform="translate(84 15) rotate(90)">385</SvgT>
    <SvgT x="80" y="22">88</SvgT>
    <SvgT transform="translate(126 13) rotate(90)">635</SvgT>
    <SvgT x="110" y="50">665</SvgT>
  </ShapeSvg>
);
const FlatShape = ({ t }: { t: string }) => (
  <ShapeSvg $h={27} viewBox="0 0 200 27">
    <path d="M36.500 19v-4M36.500 20h131M168 19v-4" fill="none" stroke="#000" strokeWidth="2" />
    <path d="M37 16h2M166 16h2" stroke="#000" strokeWidth="2" />
    <SvgT x="90" y="15" textAnchor="middle" $red>{t}</SvgT>
  </ShapeSvg>
);

const hooks = Array.from({ length: 10 }, (_, i) => i);
const Wire = () => (
  <CanvasSvg viewBox="170 197 1196 202">
    <rect x="170" y="197" width="1196" height="202" fill="#b2b200" />
    <path d="M170 197h100l75 125 20 77H170z" fill="#999900" />
    <path d="M403 197c-6 30-6 60 7 117l18 85h384l-45-202z" fill="#999900" />
    <path d="M879 197l46 202h441V197z" fill="#808080" />
    <path d="M170 394l37 5h-37z" fill="#000" />
    <g fill="none" stroke="#9c9094" strokeWidth="1.700">
      <path d="M525 197l18 85 97 12 20 20M557 197l16 75 70 8M588 197l15 65 77-5" />
      <path d="M643 197l20 43M653 197l20 43M668 197l28 60M680 197l28 60M692 197l14 30M710 197l13 30M730 197l12 30M750 197l15 40" />
      <path d="M640 234l113-37M650 245l150-48M670 260l150-56M647 254l66 3 60-17M710 220l50 9 107 1M783 197l50 20 50-7" />
      <path d="M650 306L957 197" />
      {hooks.map((i) => (
        <path key={i} d={`M${690 + i * 29.700} ${293 - i * 10.700}l3.500 16h3l-3.500-16`} />
      ))}
      <path d="M600 294l30-3M622 296l30-3M640 283l25-6" strokeWidth="3" />
    </g>
    <g fill="none" stroke="#fff" strokeWidth="1.600">
      <path d="M512 197l24 108 124 18 362-121" />
      <path d="M536 305L860 197" />
      <path d="M546 197l19 87 79 10 8-3M565 284L815 197M621 197l22 97M642 197l20 88" />
      <path d="M596 284L925 197M660 323l-8-33" />
      <path d="M652 290L900 207" strokeWidth="2.200" />
      <path d="M656 290L935 197" strokeWidth="2" />
      <path d="M662 290L950 197" strokeDasharray="2 1" strokeWidth="2" />
    </g>
    <g fill="none" stroke="#d4d48c" strokeWidth="1">
      <circle cx="767.500" cy="298" r="89.500" />
      <circle cx="767.500" cy="208" r="5.500" /><circle cx="678" cy="298" r="5.500" />
      <circle cx="857" cy="298" r="5.500" /><circle cx="767.500" cy="387.500" r="5.500" />
      <path d="M762 208h11M767.500 202v12M678 292v12M857 292v12M767.500 382v11" />
    </g>
  </CanvasSvg>
);

const Tick = () => (
  <CheckBox viewBox="0 0 11 11">
    <path d="M.5.5h10v10H.5z" fill="#fff" stroke="#8a8a8a" />
    <path d="M2.500 5.500l2 2 4-4" fill="none" stroke="#333" />
  </CheckBox>
);

export default function App() {
  return (
    <Page>
      <Global />
      <TitleBar>
        <TIco k="app" s={18} />
        <TitleText>广联达BIM钢筋算量软件 GGJ2013 - [C:\Users\Administrator.PC-20141127NRHM\Desktop\白龙村-2017-02-24-17-45-32(2168版).GGJ12]</TitleText>
        <WinBtn $w={46}><svg width="11" height="11"><path d="M0 5.500h10" stroke="#222" /></svg></WinBtn>
        <WinBtn $w={46}><svg width="11" height="11"><path d="M.5 2.500h8v8h-8zM2.500 2.500v-2h8v8h-2" fill="none" stroke="#222" /></svg></WinBtn>
        <WinBtn $w={46}><svg width="11" height="11"><path d="M.5.500l10 10M10.500.500l-10 10" stroke="#222" /></svg></WinBtn>
      </TitleBar>
      <Badge>73</Badge>
      <MenuBar>
        {menus.map(([t, w]) => <MenuItem key={t} $w={w}>{t}</MenuItem>)}
        <Inline $gap={4}><Ico k="change" /><MenuItem>新建变更</MenuItem><Caret $ml={3} /></Inline>
        <Inline $gap={4} $ml={8}><Ico k="bot" /><MenuItem>广小二</MenuItem></Inline>
        <Hint>吊筋能否识别?</Hint>
        <Inline $gap={4}><Ico k="user" /><MenuItem $fs={12.7}>13907298339</MenuItem><Caret $ml={5} /></Inline>
        <MenuItem $ml={8}>造价豆:0</MenuItem>
        <Inline $ml={8}><Ico k="bell" /></Inline>
        <More ml={35} />
      </MenuBar>
      <MainBar>
        <Tool icon="doc" m={4} />
        <Tool icon="open" m={6} /><Caret $ml={5} />
        <Tool icon="save" m={8} />
        <Sep />
        <Tool icon="undo" m={2} /><Caret $ml={6} />
        <More ml={21} />
        <Tool icon="define" m={11}>定义</Tool>
        <Tool icon="sigma" m={7}>汇总计算</Tool>
        <Tool icon="check" m={5}>云检查</Tool>
        <Tool icon="flush" m={9} dim>平齐板顶</Tool>
        <Tool icon="find" m={5}>查找图元</Tool>
        <Tool icon="look" m={9}>查看钢筋量</Tool>
        <Tool icon="batch" m={6} dim>批量选择</Tool>
        <More ml={39} />
        <Tool icon="cube" m={5} gap={6}>三维</Tool><Caret $ml={10} />
        <Tool icon="cubeT" m={6}>俯视</Tool><Caret $ml={10} />
        <Tool icon="orbit" m={4} on pad={2}>动态观察</Tool>
        <Tool icon="cubeG" m={4} dim>局部三维</Tool>
        <Sep $ml={7} $mr={4} />
        <Tool icon="full" m={1}>全屏</Tool>
        <Tool icon="zoom" m={6}>缩放</Tool><Caret $ml={7} />
        <Tool icon="pan" m={8}>平移</Tool><Caret $ml={8} />
        <Tool icon="spin" m={7}>屏幕旋转</Tool><Caret $ml={4} />
        <Sep $ml={6} $mr={6} />
        <Tool icon="floors" m={1}>选择楼层</Tool>
        <More ml={33} />
      </MainBar>
      <Work>
        <Nav>
          <NavHead>
            <NavTitle>模块导航栏</NavTitle>
            <Ico k="pin" s={12} />
            <svg width="20" height="12" viewBox="0 0 20 12"><path d="M6 2l8 8M14 2l-8 8" stroke="#fff" /></svg>
          </NavHead>
          <NavBtn $mt={1}>工程设置</NavBtn>
          <NavBtn $mt={1}>绘图输入</NavBtn>
          <PlusRow><Ico k="plus" s={18} /><Ico k="minus" s={18} /></PlusRow>
          <TreeBox>
            <TreeList>
              {tree.map((r, i) =>
                r.p ? (
                  <ParentRow key={i}>
                    <Chev viewBox="0 0 11 11">
                      {r.p === "c"
                        ? <path d="M3 1.500L7.500 5.500 3 9.500" fill="none" stroke="#a6a6a6" strokeWidth="1.500" />
                        : <path d="M1 3l4.500 4.500L10 3" fill="none" stroke="#555" strokeWidth="1.500" />}
                    </Chev>
                    <Dots />
                    <Ico k={r.p === "o" ? "folderO" : "folder"} />
                    <RowLabel>{r.t}</RowLabel>
                  </ParentRow>
                ) : (
                  <ChildRow key={i} $last={r.last}>
                    <Ico k={r.i!} />
                    <RowLabel $sel={r.sel}><Mix t={r.t} /></RowLabel>
                    {r.sel && <Ico k="tbl" s={13} />}
                  </ChildRow>
                )
              )}
              <ClippedRow><ClippedFold /><ClippedTag /></ClippedRow>
            </TreeList>
            <TreeBar>
              <Arrow d="up" mt={2} />
              <Thumb $mt={126} $h={313} />
              <Arrow d="down" mt={12} />
            </TreeBar>
          </TreeBox>
          <NavBtn $mt={0}>单构件输入</NavBtn>
          <NavBtn $mt={1}>报表预览</NavBtn>
        </Nav>
        <Content>
          <Bar $h={26} $ml={627} $w={409}>
            <Grip $ml={3} />
            <White $w={46} $ml={3}>不偏移</White>
            <Caret $ml={6} />
            <Sep $ml={5} $mr={0} />
            <Spin $w={58} $ml={21} />
            <Spin $w={58} $ml={46} />
            <MenuItem $w={24} $ml={1} $dim>mm</MenuItem>
            <Sep $ml={2} $mr={0} />
            <Check $ml={4} />
            <Tool m={8}>旋转</Tool>
            <Spin $w={68} $ml={4}>0.000<SpinArrows>▲<br />▼</SpinArrows></Spin>
            <MenuItem $ml={3}>°</MenuItem>
          </Bar>
          <Bar $h={22} $mt={4} $ml={2} $w={791}>
            <Grip $ml={3} />
            <Tool icon="erase" m={4} dim>删除</Tool>
            <Sep $ml={6} $mr={0} />
            <Tool icon="copy" m={5} dim>复制</Tool>
            <Tool icon="mirror" m={7} dim>镜像</Tool>
            <Sep $ml={6} $mr={0} />
            <Tool icon="move" m={6} dim>移动</Tool>
            <Tool icon="rotate" m={6} dim>旋转</Tool>
            <Sep $ml={6} $mr={0} />
            <Tool icon="extend" m={7} dim>延伸</Tool>
            <Tool icon="trim" m={8} dim>修剪</Tool>
            <Sep $ml={6} $mr={0} />
            <Tool icon="brk" m={8} dim>打断</Tool>
            <Tool icon="merge" m={5} dim>合并</Tool>
            <Tool icon="split" m={6} dim>分割</Tool>
            <Sep $ml={11} $mr={0} />
            <Tool icon="align" m={1} dim>对齐</Tool><Caret $ml={1} />
            <Tool icon="offs" m={10} dim>偏移</Tool>
            <Tool icon="stretch" m={8} dim>拉伸</Tool>
            <Sep $ml={6} $mr={0} />
            <Tool icon="grip" m={6} dim>设置夹点</Tool>
          </Bar>
          <RowGroup $h={25} $mt={4}>
            <Bar $h={25} $ml={5} $w={562}>
              <Grip />
              <Combo>首层<ComboBtn><Caret $ml={0} /></ComboBtn></Combo>
              <White $w={45}>自定义</White><Caret $ml={18} />
              <White $w={46} $ml={4}>自定义线</White><Caret $ml={17} />
              <White $w={46} $ml={4}>ZDYX-26</White><Caret $ml={17} />
              <Sep $ml={7} $mr={0} />
              <Tool icon="attr" m={7}>属性</Tool>
              <Tool icon="edit" m={4} on pad={2}>编辑钢筋</Tool>
              <Tool icon="list" m={4}>构件列表</Tool>
              <Tool icon="pick" m={6}>拾取构件</Tool>
            </Bar>
            <Grip $ml={5} />
            <Faded />
            <Bar $h={25} $ml={75} $w={422}>
              <Grip $ml={2} />
              <Tool icon="two" m={5}>两点</Tool>
              <Tool icon="para" m={6}>平行</Tool>
              <Tool icon="ang" m={7}>点角</Tool><Caret $ml={7} />
              <Tool icon="arcA" m={8}>三点辅轴</Tool><Caret $ml={7} />
              <Tool icon="brush" m={7}>删除辅轴</Tool>
              <Tool icon="dim" m={7}>尺寸标注</Tool><Caret $ml={7} />
            </Bar>
          </RowGroup>
          <Bar $h={26} $mt={4} $ml={2} $w={487}>
            <Grip $ml={3} />
            <Tool icon="arrow" m={3}>选择</Tool><Caret $ml={7} />
            <Sep $ml={7} $mr={0} />
            <Tool icon="line" m={7}>直线</Tool>
            <Tool icon="addL" m={7}>点加长度</Tool>
            <Tool icon="arc" m={7}>三点画弧</Tool><Caret $ml={7} />
            <White $w={52} $ml={5} />
            <Caret $ml={-6} />
            <Tool icon="rect" m={11}>矩形</Tool>
            <Sep $ml={6} $mr={0} />
            <Tool icon="smart" m={6}>智能布置</Tool><Caret $ml={2} />
          </Bar>
          <Canvas>
            <Wire />
            <Panel>
              <PanelHead>钢筋显示控制面板</PanelHead>
              <PanelBody>
                {["水平纵筋", "横向钢筋", "显示其它图元", "显示详细公式"].map((t) => (
                  <CheckRow key={t}><Tick />{t}</CheckRow>
                ))}
              </PanelBody>
            </Panel>
          </Canvas>
          <Bar $h={25} $mt={2} $ml={2} $w={473}>
            <Grip $ml={2} />
            <Tool icon="ortho" m={5}>正交</Tool>
            <Tool icon="snap" m={4} on pad={2}>对象捕捉</Tool>
            <Tool icon="dyn" m={-1} on pad={2}>动态输入</Tool>
            <Grip $ml={6} />
            <Tool icon="inter" m={8}>交点</Tool>
            <Tool icon="perp" m={4} on pad={2}>垂点</Tool>
            <Tool icon="mid" m={0} on pad={3}>中点</Tool>
            <Tool icon="vert" m={4}>顶点</Tool>
            <Tool icon="coord" m={7}>坐标</Tool>
          </Bar>
          <Lower>
            <Strip><StripIcon><Ico k="closeRed" s={11} /></StripIcon></Strip>
            <Main>
              <Bar $h={26}>
                <Tool icon="first" m={3} />
                <Tool icon="prev" m={10} />
                <Tool icon="next" m={10} />
                <Tool icon="last" m={7} />
                <Sep $ml={8} $mr={0} />
                <Tool icon="up" m={5} />
                <Tool icon="down" m={6} />
                <Sep $ml={4} $mr={0} />
                <Tool icon="ins" m={3} dim>插入</Tool>
                <Tool icon="del" m={7} dim>删除</Tool>
                <Tool icon="scale" m={7} dim>缩尺配筋</Tool>
                <Tool icon="info" m={7}>钢筋信息</Tool>
                <Tool icon="lib" m={7}>钢筋图库</Tool>
                <Tool icon="other" m={8}>其他</Tool><Caret $ml={4} />
                <Tool m={7}>关闭</Tool>
                <Sep $ml={7} $mr={0} />
                <MenuItem $ml={8}>单构件钢筋总重(kg) : 78.609</MenuItem>
              </Bar>
              <GridFrame>
                <GridRow>
                  <TableClip>
                    <Table>
                      <colgroup>{cols.map((w, i) => <col key={i} width={w} />)}</colgroup>
                      <thead>
                        <Tr $h={20}>{heads.map((h, i) => <Th key={i} $sel={i === 1}><Mix t={h} /></Th>)}</Tr>
                      </thead>
                      <tbody>
                        {rows.map((r, i) => (
                          <Tr key={r.n} $h={r.h}>
                            <RowTh $on={i === 0}><Mix t={r.n} /></RowTh>
                            <Td $hl={i === 0} $bar><Mix t={r.name} /></Td>
                            <Td><Mix t={r.d} /></Td>
                            <Td $c>{r.g}</Td>
                            <Td><Mix t={r.no} /></Td>
                            <ShapeCell>{r.shape ? <FlatShape t={r.shape} /> : <BentShape />}</ShapeCell>
                            <Td><Mix t={r.f} /></Td>
                            <Td><Mix t={r.desc} /></Td>
                            <Td><Mix t={r.len} /></Td>
                            <Td><Mix t={r.cnt} /></Td>
                            <Td><Mix t="0" /></Td>
                            <Td><Mix t="0" /></Td>
                            <Td><Mix t={r.w} /></Td>
                            <Td><Mix t={r.tw} /></Td>
                            <Td>直筋</Td>
                            <Td>绑扎</Td>
                          </Tr>
                        ))}
                      </tbody>
                    </Table>
                  </TableClip>
                  <VBar>
                    <Arrow d="up" mt={2} />
                    <Thumb $mt={0} $h={111} />
                    <Grow />
                    <Arrow d="down" />
                  </VBar>
                </GridRow>
                <HBar>
                  <Arrow d="left" />
                  <Thumb $mt={0} $h={17} $w={811} />
                  <Grow />
                  <Arrow d="right" />
                  <HEnd />
                </HBar>
              </GridFrame>
            </Main>
          </Lower>
        </Content>
      </Work>
      <Status>
        <Cell $w={148} $ml={0}><Mix t="X=32353 Y=19798" /></Cell>
        <Cell $w={77}>层高:<Mix t="4.5m" /></Cell>
        <Cell $w={98}>底标高:<Mix t="-0.03m" /></Cell>
        <Cell $w={49}><Mix t="1(1)" /></Cell>
        <Cell $w={914} />
        <Cell $w={69}><Mix t="425.5 FPS" /></Cell>
      </Status>
      <Taskbar>
        <Start><TIco k="win" s={17} /></Start>
        <Search>
          <Ring />
          在这里输入你要搜索的内容
          <SearchMic><TIco k="mic" s={20} /></SearchMic>
        </Search>
        <TaskApp><TIco k="fan" /></TaskApp>
        <TaskApp><TIco k="swirl" /></TaskApp>
        <TraySep />
        <TaskApp $w={53} $pl={6}><TIco k="edge" /></TaskApp>
        <TaskApp><TIco k="store" /></TaskApp>
        <TaskApp><TIco k="fold" /></TaskApp>
        <TaskApp $on $open><TIco k="app" /></TaskApp>
        <TaskApp $open><TIco k="ie" /></TaskApp>
        <TaskApp $open><TIco k="notes" /></TaskApp>
        <TaskApp $open><TIco k="board" /></TaskApp>
        <Tray>
          <Cpu>33%<br />CPU使用</Cpu>
          <TrayIcon $w={24}><svg width="12" height="8"><path d="M1 7l5-5 5 5" fill="none" stroke="#fff" /></svg></TrayIcon>
          <TrayIcon $w={25}><TIco k="batt" s={18} /></TrayIcon>
          <TrayIcon $w={25}><TIco k="wifi" s={18} /></TrayIcon>
          <TrayIcon $w={25}><TIco k="spk" s={18} /></TrayIcon>
          <TrayIcon $w={17}>中</TrayIcon>
          <TrayIcon $w={38}><TIco k="sg" s={18} /></TrayIcon>
          <Clock>15:48<br />2017/6/6</Clock>
          <Notif><TIco k="note" s={20} /><NotifCount>2</NotifCount></Notif>
        </Tray>
      </Taskbar>
      <Ime>
        <TIco k="sg" s={28} />
        <ImeBar>
          <ImeT>英</ImeT>
          <ImeT>',</ImeT>
          <ImeI viewBox="0 0 16 16"><rect x="5" y="1" width="6" height="9" rx="3" fill="#1a78c8" /><path d="M3 8c0 6 10 6 10 0M8 12v3" fill="none" stroke="#1a78c8" /></ImeI>
          <ImeI viewBox="0 0 16 16"><rect x="0" y="3" width="16" height="11" rx="1" fill="#1a78c8" /><path d="M2 6h12M2 8.500h12M4 11h8" stroke="#fff" strokeDasharray="1 1" /></ImeI>
          <ImeI viewBox="0 0 16 16"><circle cx="7" cy="5" r="3" fill="#b8c6d2" /><path d="M2 14c0-4 2-5 5-5l1 5z" fill="#b8c6d2" /><path d="M9 10h6v5H9z" fill="#b8c6d2" /></ImeI>
          <ImeI viewBox="0 0 16 16"><path d="M4 2l4 1 4-1 3 3-2 2-1-1v8H4V6L3 7 1 5z" fill="#1a78c8" /></ImeI>
          <ImeI viewBox="0 0 16 16"><path d="M15 4a4 4 0 0 1-5 4l-6 7-3-3 7-6a4 4 0 0 1 4-5l-2 3 2 2z" fill="#1a78c8" /></ImeI>
        </ImeBar>
      </Ime>
    </Page>
  );
}
